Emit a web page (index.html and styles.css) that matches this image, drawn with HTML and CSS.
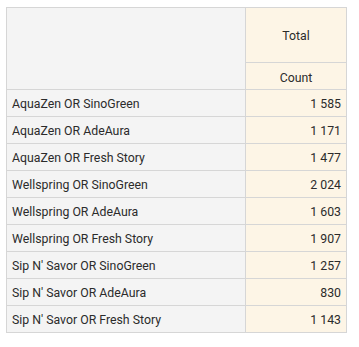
FILE: index.html
```html
<!DOCTYPE html>
<html>
<head>
<meta charset="utf-8">
<link rel="stylesheet" href="styles.css">
</head>
<body>
<table class="pivot">
  <thead>
    <tr class="h-total"><th class="corner" rowspan="2"></th><th class="measure-head">Total</th></tr>
    <tr class="h-count"><th class="measure-head">Count</th></tr>
  </thead>
  <tbody>
    <tr><th class="row-head">AquaZen OR SinoGreen</th><td class="num">1 585</td></tr>
    <tr><th class="row-head">AquaZen OR AdeAura</th><td class="num">1 171</td></tr>
    <tr><th class="row-head">AquaZen OR Fresh Story</th><td class="num">1 477</td></tr>
    <tr><th class="row-head">Wellspring OR SinoGreen</th><td class="num">2 024</td></tr>
    <tr><th class="row-head">Wellspring OR AdeAura</th><td class="num">1 603</td></tr>
    <tr><th class="row-head">Wellspring OR Fresh Story</th><td class="num">1 907</td></tr>
    <tr><th class="row-head">Sip N' Savor OR SinoGreen</th><td class="num">1 257</td></tr>
    <tr><th class="row-head">Sip N' Savor OR AdeAura</th><td class="num">830</td></tr>
    <tr><th class="row-head">Sip N' Savor OR Fresh Story</th><td class="num">1 143</td></tr>
  </tbody>
</table>
</body>
</html>
```

FILE: styles.css
```css
html, body {
  margin: 0;
  padding: 0;
  background: #ffffff;
}
body {
  font-family: Roboto, "Liberation Sans", Arial, sans-serif;
  font-size: 12.3px;
  color: #2b2b2b;
}
.pivot {
  margin: 7px 0 0 6px;
  border-collapse: collapse;
  table-layout: fixed;
  width: 341px;
}
.pivot th, .pivot td {
  border: 1px solid #d6d6d6;
  padding: 1px 5px 0 5px;
  font-weight: normal;
  box-sizing: border-box;
  white-space: nowrap;
}
.corner {
  background: #f4f4f4;
  width: 239px;
}
.measure-head {
  background: #fdf5e6;
  text-align: center;
}
.h-total th {
  height: 55px;
}
.h-count th {
  height: 27px;
}
.h-count .measure-head {
  padding-top: 3px;
}
.row-head {
  background: #f4f4f4;
  text-align: left;
  height: 27px;
}
.num {
  background: #fdf5e6;
  text-align: right;
}
```
